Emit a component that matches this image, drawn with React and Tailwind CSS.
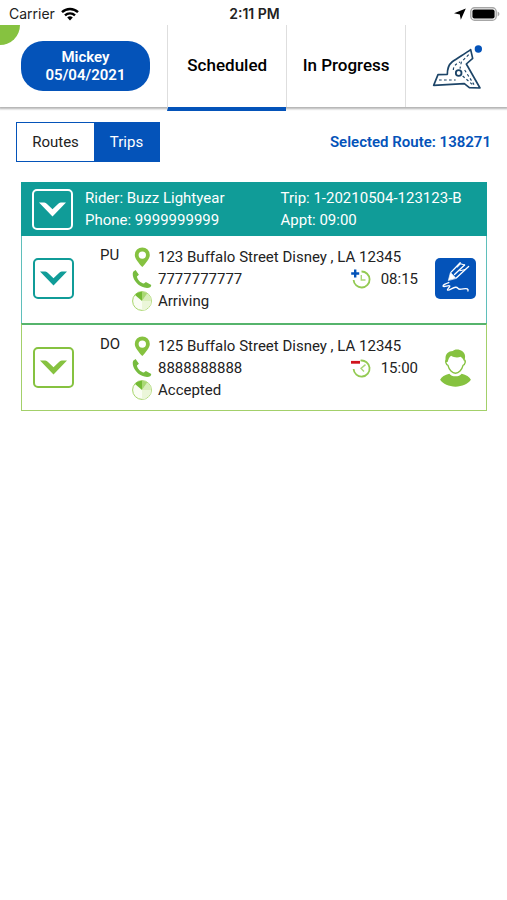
const STOPS = [
  {
    id: "PU",
    address: "123 Buffalo Street Disney , LA 12345",
    phone: "7777777777",
    status: "Arriving",
    time: "08:15",
  },
  {
    id: "DO",
    address: "125 Buffalo Street Disney , LA 12345",
    phone: "8888888888",
    status: "Accepted",
    time: "15:00",
  },
];

function WifiIcon() {
  return (
    <svg width="18" height="14" viewBox="0 0 18 14" fill="none" stroke="#000" strokeWidth="2.4">
      <path d="M1 5.2a11.5 11.5 0 0 1 16 0" />
      <path d="M4 8.4a7.2 7.2 0 0 1 10 0" />
      <path d="M9 13.4 6.2 10.6a4 4 0 0 1 5.6 0z" fill="#000" stroke="none" />
    </svg>
  );
}

function LocationIcon() {
  return (
    <svg width="12" height="12" viewBox="0 0 12 12" fill="#000">
      <path d="M11.8.6 0 5.2l5.8 1.2 1 5.4z" />
    </svg>
  );
}

function BatteryIcon() {
  return (
    <svg width="30" height="14" viewBox="0 0 30 14">
      <rect x="0.8" y="0.8" width="25.4" height="12.4" rx="3.8" fill="#fff" stroke="#a6a6a6" strokeWidth="1.4" />
      <rect x="2.4" y="2.4" width="22.2" height="9.2" rx="2" fill="#000" />
      <path d="M27.6 4.6c2.4.8 2.4 4 0 4.8z" fill="#a6a6a6" />
    </svg>
  );
}

function RoadMapIcon() {
  return (
    <svg width="50" height="45" viewBox="92 130 150 135" fill="none">
      <path
        d="M208 147 C190 160 168 172 152 184 C141 193 138 204 138 221 L110 222 L97 254 L189 249 L204 261 L236 262 L195 190 L214 173 Z"
        fill="#fff"
        stroke="#1d4568"
        strokeWidth="5"
        strokeLinejoin="round"
      />
      <g stroke="#1d4568" strokeWidth="3.5" strokeDasharray="8 7">
        <path d="M113 238h50" />
        <path d="M202 162 180 184l-4 20" />
        <path d="M156 208c0-12 8-18 20-24" />
        <path d="M184 226l32 28" />
        <path d="M190 208l28 44" />
      </g>
      <circle cx="172" cy="217" r="8.5" fill="#fff" stroke="#1d4568" strokeWidth="5.5" />
      <circle cx="231" cy="145" r="11" fill="#0453b9" />
    </svg>
  );
}

function ChevronIcon() {
  return (
    <svg width="27" height="15" viewBox="0 0 27 15" fill="currentColor">
      <path d="M0 .5h5.200c1.200.1 2 .8 2.800 1.500l5.500 5.300L19 2c.8-.7 1.600-1.400 2.800-1.500H27L13.500 14.500z" />
    </svg>
  );
}

function PinIcon() {
  return (
    <svg width="20" height="20" viewBox="0 0 20 20" fill="#86c240">
      <path
        fillRule="evenodd"
        d="M10.300.4a7.500 7.500 0 0 0-7.500 7.500c0 4 4.200 8.200 7.500 12.100 3.300-3.900 7.500-8.100 7.500-12.100A7.500 7.500 0 0 0 10.300.4zm0 4a3.700 3.700 0 1 1 0 7.400 3.700 3.700 0 0 1 0-7.400z"
      />
    </svg>
  );
}

function PhoneIcon() {
  return (
    <svg width="20" height="20" viewBox="0 0 20 20" fill="#77bc3f">
      <path d="M1.200 2.800 3.600 1l3.300 4.700-2 1.900c.7 3.500 3.500 6.300 7 7l2-1.700 5.400 3-.7 2.200c-1.600.9-3.800 1.200-6.200.5C6.200 17 1.500 11.400.8 6.200c-.2-1.300 0-2.500.4-3.400z" />
    </svg>
  );
}

function ProgressIcon() {
  return (
    <svg width="20" height="20" viewBox="0 0 20 20">
      <circle cx="10" cy="10" r="9.400" fill="#fafdf4" stroke="#a5d468" />
      <path d="M10 10 15.300 2.500A9.200 9.200 0 0 1 19.200 10z" fill="#d9eebb" />
      <path d="M10 10H19.200A9.200 9.200 0 0 1 10 19.200z" fill="#ebf6d9" />
      <path d="M10 10V.8A9.200 9.200 0 0 1 15.300 2.500z" fill="#a9d873" />
      <path d="M10 10 3 4.100A9.200 9.200 0 0 1 10 .8z" fill="#74bb34" />
    </svg>
  );
}

function EarlyClockIcon() {
  return (
    <svg width="20" height="20" viewBox="0 0 20 20" fill="none">
      <path d="M10.500 2.500A8 8 0 1 1 2.600 11" stroke="#93ca52" strokeWidth="1.800" />
      <path d="M10.300 6v5h4.200" stroke="#a9d676" strokeWidth="1.400" />
      <path d="M4.200.5v8M.2 4.500h8" stroke="#0453b9" strokeWidth="2.400" />
    </svg>
  );
}

function LateClockIcon() {
  return (
    <svg width="20" height="20" viewBox="0 0 20 20" fill="none">
      <path d="M9.500 2.600A8 8 0 1 1 2.600 11" stroke="#93ca52" strokeWidth="1.800" />
      <path d="M14.500 6.600 10 10.400l3 3.200" stroke="#a9d676" strokeWidth="1.400" />
      <path d="M0 4.300h9" stroke="#d0141c" strokeWidth="2.800" />
    </svg>
  );
}

function SignIcon() {
  return (
    <svg width="41" height="41" viewBox="0 0 122 122" fill="none" stroke="#fff" strokeLinejoin="round" strokeLinecap="round">
      <path d="M40 66 46 43 62 60z" fill="#fff" strokeWidth="2" />
      <path d="M48 42 75 14M64 59 100 25" strokeWidth="4" />
      <path d="M58 49 88 21" strokeWidth="4" />
      <path d="M66 27 76 17l12 4M74 38l16-4" strokeWidth="3" />
      <path
        d="M41 73c-10 3-18 8-17 11 2 4 17-4 20-1 2 3-9 9-7 12 4 4 15-7 24-8 8-1 6 6 13 6 9 0 17-4 22-1 3 2 3 4 2 6"
        strokeWidth="4"
      />
    </svg>
  );
}

function PersonIcon() {
  return (
    <svg width="31" height="38" viewBox="0 0 90 111" fill="#86c240">
      <path d="M17 38C12 16 22 7 37 6c6-9 36-6 36 16 0 6-1 11-2 16-3-7-6-12-11-15-9 3-20 2-28-3-6 5-8 11-10 18z" />
      <path
        d="M19 32c-5 1-2 14 4 16 3 13 13 23 22 23s19-10 22-23c6-2 9-15 4-16"
        fill="none"
        stroke="#86c240"
        strokeWidth="4"
      />
      <path d="M27 72c6 10 30 10 36 0 13 3 23 8 27 18-8 12-26 20-45 20S8 102 0 90c4-10 14-15 27-18z" />
    </svg>
  );
}

function StatusBar() {
  return (
    <div className="grid h-[25px] grid-cols-3 items-center pl-[9px] pr-[7px] pt-0.5 font-['Inter',sans-serif] text-sm text-[#222]">
      <div className="flex items-center gap-1.5">
        Carrier <WifiIcon />
      </div>
      <div className="text-center font-semibold">2:11 PM</div>
      <div className="flex items-center justify-end gap-1">
        <LocationIcon />
        <BatteryIcon />
      </div>
    </div>
  );
}

function Header() {
  return (
    <header className="grid h-[82px] grid-cols-[33%_1fr_1fr_102px] shadow-[0_1px_2px_1px_rgba(0,0,0,0.3)] [clip-path:inset(0_0_-8px_0)]">
      <div className="relative flex items-center overflow-hidden pl-[21px]">
        <span className="absolute -left-5 -top-5 size-10 rounded-full bg-[#86c240]" />
        <button className="relative h-[50px] w-[129px] rounded-[22px] bg-[#0453b9] text-[15px] font-semibold leading-[18px] text-white">
          Mickey
          <br />
          05/04/2021
        </button>
      </div>
      <button className="-mb-1 border-b-4 border-l border-b-[#0453b9] border-l-[#dedede] text-[17px] font-medium text-black">
        Scheduled
      </button>
      <button className="border-l border-[#dedede] text-[17px] font-medium text-black">
        In Progress
      </button>
      <button aria-label="Map" className="flex items-center justify-center border-l border-[#dedede]">
        <RoadMapIcon />
      </button>
    </header>
  );
}

function ExpandButton({ className }) {
  return (
    <button
      aria-label="Expand"
      className={`flex size-[41px] shrink-0 items-center justify-center rounded-[5px] border-2 ${className}`}
    >
      <ChevronIcon />
    </button>
  );
}

function StopRow({ stop }) {
  const pickup = stop.id === "PU";

  return (
    <div
      className={`flex border-x px-2.5 pt-2.5 ${
        pickup
          ? "h-[87px] border-[#5fbfbb]"
          : "h-[88px] border-b border-t-2 border-b-[#a3d06a] border-t-[#56b46c] border-x-[#a3d06a]"
      }`}
    >
      <div className="pl-px pt-3">
        <ExpandButton className={pickup ? "border-[#109c98] text-[#109c98]" : "border-[#86c240] text-[#86c240]"} />
      </div>
      <div className="w-[58px] pl-[26px] leading-[18px]">{stop.id}</div>

      <div className="flex-1 leading-[22px]">
        <div className="flex items-center gap-1.5">
          <PinIcon />
          {stop.address}
        </div>
        <div className="flex items-center gap-1.5">
          <PhoneIcon />
          <span className="flex-1">{stop.phone}</span>
          {pickup ? <EarlyClockIcon /> : <LateClockIcon />}
          <span className="pl-1">{stop.time}</span>
        </div>
        <div className="flex items-center gap-1.5">
          <ProgressIcon />
          {stop.status}
        </div>
      </div>

      <div className="pl-[17px] pt-3">
        {pickup ? (
          <button aria-label="Sign" className="block rounded-[5px] bg-[#0453b9]">
            <SignIcon />
          </button>
        ) : (
          <button aria-label="Rider" className="flex size-[41px] items-center justify-center">
            <PersonIcon />
          </button>
        )}
      </div>
    </div>
  );
}

export default function App() {
  return (
    <div className="min-h-screen bg-white font-['Roboto',sans-serif] text-[15px] text-[#222]">
      <StatusBar />
      <Header />

      <main className="px-4 pt-[15px]">
        <div className="flex items-center justify-between">
          <div className="flex h-10 border border-[#0453b9]">
            <button className="w-[77px]">Routes</button>
            <button className="w-[65px] bg-[#0453b9] text-white">Trips</button>
          </div>
          <p className="font-semibold text-[#0453b9]">Selected Route: 138271</p>
        </div>

        <section className="ml-[5px] mr-1 mt-5">
          <div className="flex items-center border border-[#109c98] bg-[#109c98] px-2.5 py-1 leading-[22px] text-white">
            <ExpandButton className="border-white text-white" />
            <div className="grid flex-1 grid-cols-2 pl-3">
              <p>Rider: Buzz Lightyear</p>
              <p>Trip: 1-20210504-123123-B</p>
              <p>Phone: 9999999999</p>
              <p>Appt: 09:00</p>
            </div>
          </div>
          {STOPS.map((stop) => (
            <StopRow key={stop.id} stop={stop} />
          ))}
        </section>
      </main>
    </div>
  );
}
